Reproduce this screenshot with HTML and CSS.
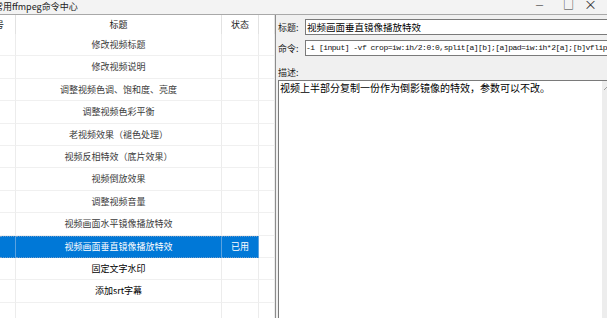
FILE: index.html
```html
<!DOCTYPE html>
<html lang="zh-CN">
  <head>
    <meta charset="UTF-8" />
    <meta name="viewport" content="width=device-width, initial-scale=1.0" />
    <title>常用ffmpeg命令中心</title>
    <link rel="stylesheet" href="styles.css">
  </head>
  <body>
    <div class="window">
      <div class="titlebar">
        <span class="title">常用ffmpeg命令中心</span>
        <div class="controls">
          <span class="min">—</span>
          <span class="max">□</span>
          <span class="close">×</span>
        </div>
      </div>
      <div class="main">
        <div class="grid">
          <div class="row head">
            <div class="cell idx"><span>序号</span></div>
            <div class="cell">标题</div>
            <div class="cell">状态</div>
            <div class="cell"></div>
          </div>
          <div class="row"><div class="cell idx"></div><div class="cell">修改视频标题</div><div class="cell"></div><div class="cell"></div></div>
          <div class="row"><div class="cell idx"></div><div class="cell">修改视频说明</div><div class="cell"></div><div class="cell"></div></div>
          <div class="row"><div class="cell idx"></div><div class="cell">调整视频色调、饱和度、亮度</div><div class="cell"></div><div class="cell"></div></div>
          <div class="row"><div class="cell idx"></div><div class="cell">调整视频色彩平衡</div><div class="cell"></div><div class="cell"></div></div>
          <div class="row"><div class="cell idx"></div><div class="cell">老视频效果（褪色处理）</div><div class="cell"></div><div class="cell"></div></div>
          <div class="row"><div class="cell idx"></div><div class="cell">视频反相特效（底片效果）</div><div class="cell"></div><div class="cell"></div></div>
          <div class="row"><div class="cell idx"></div><div class="cell">视频倒放效果</div><div class="cell"></div><div class="cell"></div></div>
          <div class="row"><div class="cell idx"></div><div class="cell">调整视频音量</div><div class="cell"></div><div class="cell"></div></div>
          <div class="row"><div class="cell idx"></div><div class="cell">视频画面水平镜像播放特效</div><div class="cell"></div><div class="cell"></div></div>
          <div class="row selected"><div class="cell idx"></div><div class="cell">视频画面垂直镜像播放特效</div><div class="cell">已用</div><div class="cell"></div></div>
          <div class="row dark"><div class="cell idx"></div><div class="cell">固定文字水印</div><div class="cell"></div><div class="cell"></div></div>
          <div class="row dark"><div class="cell idx"></div><div class="cell">添加srt字幕</div><div class="cell"></div><div class="cell"></div></div>
          <div class="row"><div class="cell idx"></div><div class="cell"></div><div class="cell"></div><div class="cell"></div></div>
        </div>
        <div class="panel">
          <div class="field">
            <span class="label">标题:</span>
            <div class="input">视频画面垂直镜像播放特效</div>
          </div>
          <div class="field">
            <span class="label">命令:</span>
            <div class="input cmd">-i [input] -vf crop=iw:ih/2:0:0,split[a][b];[a]pad=iw:ih*2[a];[b]vflip[b];[a][b]overlay=0:h [output]</div>
          </div>
          <div class="desc-label">描述:</div>
          <div class="desc">
            <div class="desc-text">视频上半部分复制一份作为倒影镜像的特效，参数可以不改。</div>
            <div class="vscroll">
              <svg width="17" height="14" viewBox="0 0 17 14"><path d="M2 9 L5 6 L8 9" fill="none" stroke="#a0a0a0" stroke-width="1"/></svg>
            </div>
          </div>
        </div>
      </div>
    </div>
  </body>
</html>
```

FILE: styles.css
```css
* {
  box-sizing: border-box;
}
body {
  margin: 0;
  background: #f0f0f0;
  font-family: "Noto Sans CJK SC", sans-serif;
  font-size: 9px;
  color: #000;
}
.window {
  width: 607px;
  height: 318px;
  overflow: hidden;
  display: flex;
  flex-direction: column;
}
.titlebar {
  height: 15px;
  flex: none;
  display: flex;
  justify-content: space-between;
  background: #f3f3f3;
  border-bottom: 1px solid #a8a8a8;
}
.title {
  margin-left: -6px;
  line-height: 13px;
  color: #222;
}
.controls {
  display: flex;
  margin-top: -3px;
  margin-right: 4px;
  font-size: 11px;
  color: #333;
}
.controls span {
  width: 29px;
  text-align: center;
  line-height: 14px;
}
.controls .min {
  font-size: 9px;
  line-height: 16px;
}
.controls .close {
  width: 20px;
  font-size: 13px;
  text-align: left;
  padding-left: 1px;
}
.main {
  flex: 1;
  display: flex;
  min-height: 0;
}
.grid {
  width: 276px;
  flex: none;
  background: #fff;
  border-right: 1px solid #8c8c8c;
  overflow: hidden;
}
.row {
  display: grid;
  grid-template-columns: 16px 206px 37px 16px;
  height: 22.4px;
  line-height: 22px;
  color: #3a3a3a;
}
.row.head {
  height: 19px;
  line-height: 19px;
  color: #222;
}
.cell {
  text-align: center;
  white-space: nowrap;
  overflow: hidden;
  border-right: 1px solid #ececec;
  border-bottom: 1px solid #f0f0f0;
}
.head .cell {
  border-right-color: #e2e2e2;
  border-bottom: none;
}
.cell.idx {
  text-align: left;
}
.cell.idx span {
  display: inline-block;
  margin-left: -14px;
}
.row.dark {
  color: #000;
}
.row.selected .cell {
  background: #0078d7;
  color: #fff;
  border-right-color: #5aa2e0;
  border-bottom: 1px dotted #6b9ccc;
  border-top: 1px dotted #6b9ccc;
  line-height: 20px;
}
.row.selected .cell:last-child {
  background: #fff;
  border: none;
  border-right: 1px solid #ececec;
  border-bottom: 1px solid #f0f0f0;
}
.panel {
  width: 342px;
  flex: none;
  margin-left: 2px;
  padding-top: 4px;
  display: flex;
  flex-direction: column;
}
.field {
  display: flex;
  align-items: center;
  height: 16px;
  margin-bottom: 5px;
}
.label {
  width: 27px;
  flex: none;
  color: #222;
}
.input {
  flex: 1;
  height: 16px;
  background: #fff;
  border: 1px solid #7a7a7a;
  padding-left: 1px;
  line-height: 14px;
  white-space: nowrap;
  overflow: hidden;
  font-size: 9.5px;
}
.input.cmd {
  padding-left: 0;
  font-family: "Liberation Mono", monospace;
  font-size: 8px;
  letter-spacing: -0.5px;
  color: #111;
}
.desc-label {
  margin-top: 6px;
  line-height: 12px;
  color: #222;
}
.desc {
  flex: 1;
  margin-top: 1px;
  display: flex;
  background: #fff;
  border: 1px solid #7a7a7a;
  border-bottom: none;
}
.desc-text {
  flex: 1;
  padding: 1px 1px 0;
  font-size: 10px;
  line-height: 11px;
}
.vscroll {
  width: 17px;
  flex: none;
  background: #ededed;
}
.vscroll svg {
  display: block;
}
```
